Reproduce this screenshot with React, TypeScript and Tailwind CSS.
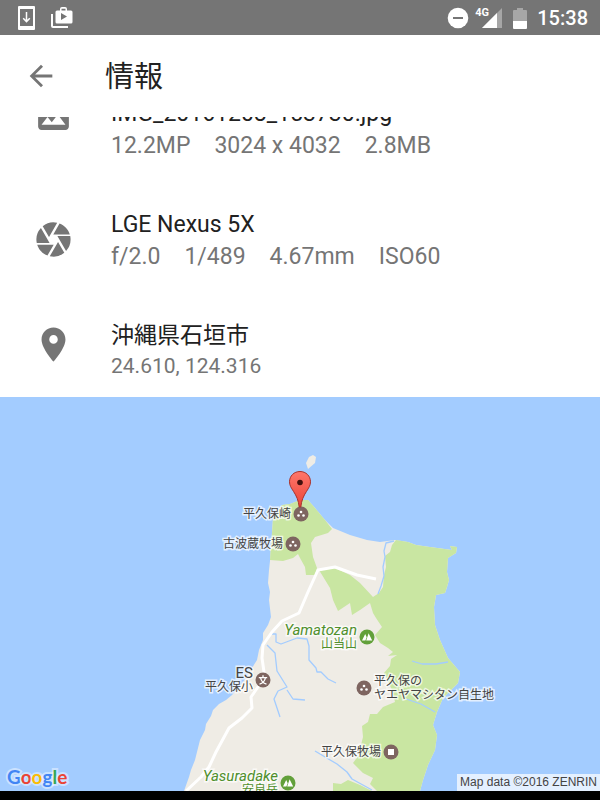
import React from "react";
import { MdArrowBack, MdCamera, MdPhoto, MdPlace } from "react-icons/md";

const details = [
  {
    icon: MdPhoto,
    iconClass: "-mt-1",
    title: "IMG_20161208_153730.jpg",
    values: ["12.2MP", "3024 x 4032", "2.8MB"],
    valueClass: "text-[23px] leading-8",
  },
  {
    icon: MdCamera,
    iconClass: "mt-2.5",
    title: "LGE Nexus 5X",
    values: ["f/2.0", "1/489", "4.67mm", "ISO60"],
    valueClass: "text-[23px] leading-8",
  },
  {
    icon: MdPlace,
    iconClass: "mt-1",
    title: "沖縄県石垣市",
    values: ["24.610, 124.316"],
    valueClass: "text-[21px] leading-7",
  },
];

const StatusBar: React.FC = () => (
  <div className="h-[35px] bg-[#757575] text-white flex items-center justify-between pl-[18px] pr-3">
    <div className="flex items-center gap-4">
      <svg width="17" height="24" viewBox="0 0 17 24" fill="none">
        <path
          fill="#fff"
          fillRule="evenodd"
          d="M1 0h15a1 1 0 0 1 1 1v22a1 1 0 0 1-1 1H1a1 1 0 0 1-1-1V1a1 1 0 0 1 1-1zM2 3v17h13V3z"
        />
        <path stroke="#fff" strokeWidth="1.500" d="M8.500 6v9.500M5.200 12.300l3.300 3.300 3.300-3.300" />
      </svg>
      <svg width="22" height="22" viewBox="0 0 22 22" fill="none">
        <path stroke="#fff" strokeWidth="2" d="M1 7v12a1 1 0 0 0 1 1h15" />
        <path
          fill="#fff"
          fillRule="evenodd"
          d="M9 3.500V2a2 2 0 0 1 2-2h3a2 2 0 0 1 2 2v1.500h4a1.500 1.500 0 0 1 1.500 1.500v10a1.500 1.500 0 0 1-1.500 1.500H6A1.500 1.500 0 0 1 4.500 15V5A1.500 1.500 0 0 1 6 3.500zM10.500 3.500h4V1.800h-4zM10 6v7l6-3.500z"
        />
      </svg>
    </div>
    <div className="flex items-center">
      <svg width="22" height="22" viewBox="0 0 22 22">
        <circle cx="11" cy="11" r="10.300" fill="#fff" />
        <path fill="#757575" d="M6 10h10v2H6z" />
      </svg>
      <div className="relative ml-3 w-[22px] h-[22px]">
        <svg width="22" height="22" viewBox="0 0 22 22">
          <path fill="#a6a6a6" d="M21 1v20H1z" />
          <path fill="#fff" d="M16 6v15H1z" />
        </svg>
        <span className="absolute -left-1.5 top-0 text-[11px] leading-3 font-bold [-webkit-text-stroke:2px_#757575] [paint-order:stroke_fill]">
          4G
        </span>
      </div>
      <svg className="ml-2.5" width="14" height="22" viewBox="0 0 14 22">
        <path fill="#a6a6a6" d="M4 1h6v2h3a1 1 0 0 1 1 1v10H0V4a1 1 0 0 1 1-1h3z" />
        <path fill="#fff" d="M0 14h14v7a1 1 0 0 1-1 1H1a1 1 0 0 1-1-1z" />
      </svg>
      <span className="ml-2.5 text-xl font-medium">15:38</span>
    </div>
  </div>
);

const PinShape: React.FC<{ kind: string }> = ({ kind }) => (
  <svg className="shrink-0" width="16" height="16" viewBox="0 0 16 16">
    <circle cx="8" cy="8" r="7.500" fill={kind === "mountain" ? "#62a03a" : "#7e6560"} />
    {kind === "dots" && (
      <g fill="#fff">
        <circle cx="8" cy="6" r="1.300" />
        <circle cx="5.500" cy="9.500" r="1.300" />
        <circle cx="10.500" cy="9.500" r="1.300" />
      </g>
    )}
    {kind === "square" && <path fill="#fff" d="M5 5h6v6H5z" />}
    {kind === "school" && (
      <path
        fill="none"
        stroke="#fff"
        strokeWidth="1.300"
        d="M8 3.200v2M3.800 5.600h8.400M5.600 5.800c.6 3 2.600 5.400 5.900 6.400M10.400 5.800c-.6 3-2.600 5.400-5.900 6.400"
      />
    )}
    {kind === "mountain" && (
      <path fill="#fff" d="M3 11.500 6.200 5l1.500 3.200-1.300 3.300zM7.200 11.500 9.600 4.200l3.600 7.300z" />
    )}
  </svg>
);

const places = [
  { kind: "dots", lines: ["平久保崎"], at: "right-[291px] top-[109px]" },
  { kind: "dots", lines: ["古波蔵牧場"], at: "right-[299px] top-[139px]" },
  { kind: "mountain", lines: ["Yamatozan", "山当山"], at: "right-[225px] top-[226px]" },
  { kind: "school", lines: ["ES", "平久保小"], at: "right-[329px] top-[269px]" },
  { kind: "dots", lines: ["平久保の", "ヤエヤマシタン自生地"], at: "left-[356px] top-[277px] flex-row-reverse" },
  { kind: "square", lines: ["平久保牧場"], at: "right-[201px] top-[347px]" },
  { kind: "mountain", lines: ["Yasuradake", "安良岳"], at: "right-[304px] top-[372px]" },
];

const Terrain: React.FC = () => (
  <svg className="block" width="600" height="394" viewBox="0 397 600 394" fill="none">
    <path
      fill="#efece5"
      d="M184 791 189 777 191 770 195 760 197 752 200 740 205 730 206 724 211 716 213 710 219 704 226 700 232 695 240 686 246 678 252 668 257 660 259 650 263 640 263 633 268 625 271 617 269 600 270 592 268 583 269 570 270 561 271 545 272 533 273 518 282 505 290 504 300 500 308 500 315 508 325 520 333 528 350 535 367 540 380 542 395 540 408 542 416 545 430 547 452 550 450 546 457 547 456 553 448 558 447 572 449 580 447 587 445 593 436 595 434 607 435 625 440 640 448 658 460 672 458 683 443 698 437 712 433 725 437 735 435 750 428 765 423 780 420 791z"
    />
    <path fill="#efece5" d="m306 463 3-6 4-2 3 2-1 6-7 6z" />
    <g fill="#c9e6a2">
      <path d="M270 560 271 545 272 533 273 518 282 505 290 504 300 500 308 500 315 508 325 520 332 529 328 533 315 537 311 543 313 557 317 568 315 575 306 575 305 567 300 558 298 554 293 558 283 561z" />
      <path d="M319 570 327 569 335 568 350 575 360 583 373 597 379 593 383 587 384 575 386 567 385 556 390 552 392 545 396 540 408 542 416 545 430 547 452 550 450 546 457 547 456 553 448 558 447 572 449 580 447 587 445 593 436 595 434 607 435 625 440 640 448 658 460 672 458 683 443 698 437 712 433 725 437 735 435 750 428 765 423 780 420 791 377 791 370 784 373 778 363 773 353 763 359 755 361 745 363 737 362 726 368 722 370 714 377 714 383 707 395 702 392 690 384 673 390 666 391 659 397 655 388 656 393 652 388 648 380 643 375 635 382 627 376 618 373 613 370 603 360 610 352 615 350 603 338 611 333 600 330 588z" />
      <path d="M333 791v-8l8 1 7-4 12 5 12 6z" />
    </g>
    <g stroke="#a3ccff" strokeWidth="1.300" strokeLinejoin="round">
      <path d="m394 541-8 2-2 8 1 6-2 10 1 9-3 10-3 8" />
      <path d="m267 645 8 8 2 18 10 16-9 4-4 8 6 18M287 690l6 9 12 1M272 634h4v8l5 2 16-6 10 1 2 7 0 14 7 8 1 4 4 0 7 7 8 4" />
      <path d="m412 661 10 3h14l12-2M406 699l15 5 14 8M315 751l22 13 10 8 5 7 20 11" />
    </g>
    <path
      stroke="#fff"
      strokeWidth="3"
      strokeLinejoin="round"
      d="m376 579-19-4-22-8-17 3-10 22-9 21-17 8-10 11-9 13-1 13 2 14-4 12-9 13 1 11-10 10-13 10-13 24-7 15-8 10-15 14"
    />
  </svg>
);

const LocationMap: React.FC = () => (
  <div className="relative h-[394px] overflow-hidden bg-[#a3ccff]">
    <div className="absolute left-1/2 top-0 w-[600px] -translate-x-1/2">
      <Terrain />
      {places.map((place) => (
        <div
          key={place.lines[0]}
          className={`absolute flex items-center gap-0.5 ${place.at} ${
            place.kind === "mountain" ? "text-[#4f8f2c]" : "text-[#444]"
          }`}
        >
          <div
            className={`flex flex-col text-xs leading-[14px] whitespace-nowrap [-webkit-text-stroke:3px_#ffffffb0] [paint-order:stroke_fill] ${
              place.at.startsWith("left") ? "items-start" : "items-end"
            }`}
          >
            {place.lines.map((line) => (
              <span
                key={line}
                className={
                  line.startsWith("Ya")
                    ? "text-[15px] leading-[14px] italic"
                    : line === "ES"
                      ? "text-[15px] leading-[14px]"
                      : ""
                }
              >
                {line}
              </span>
            ))}
          </div>
          <PinShape kind={place.kind} />
        </div>
      ))}
      <svg
        className="absolute left-[288px] top-[73px]"
        width="24"
        height="40"
        viewBox="0 0 24 40"
      >
        <defs>
          <linearGradient id="marker" x1="0" y1="0" x2="0" y2="1">
            <stop offset="0" stopColor="#ff776b" />
            <stop offset="1" stopColor="#ea4438" />
          </linearGradient>
        </defs>
        <path
          fill="url(#marker)"
          stroke="#a8322c"
          strokeWidth="1"
          d="M12 1.500c-6 0-10.500 4.500-10.500 10.300 0 3.700 1.700 6 4 9.600 3 4.600 5 9 5.700 15.600h1.600c.7-6.600 2.700-11 5.700-15.600 2.300-3.600 4-5.900 4-9.600C22.500 6 18 1.500 12 1.500z"
        />
        <circle cx="12" cy="12.500" r="2.800" fill="#42100d" />
      </svg>
    </div>
    <a
      href="#"
      className="absolute left-[7px] bottom-0.5 font-['Lato'] font-bold text-[19px] leading-6 [-webkit-text-stroke:4px_#ffffff70] [paint-order:stroke_fill]"
    >
      <span className="text-[#4285f4]">G</span>
      <span className="text-[#ea4335]">o</span>
      <span className="text-[#fbbc05]">o</span>
      <span className="text-[#4285f4]">g</span>
      <span className="text-[#34a853]">l</span>
      <span className="text-[#ea4335]">e</span>
    </a>
    <span className="absolute right-0 bottom-0 bg-white/70 px-[3px] font-['Liberation_Sans'] text-xs leading-[17px] text-[#444]">
      Map data ©2016 ZENRIN
    </span>
  </div>
);

const App: React.FC = () => {
  return (
    <div
      lang="ja"
      className="min-h-screen flex flex-col bg-white text-[#212121] font-['Roboto','Noto_Sans_CJK_JP',sans-serif]"
    >
      <StatusBar />

      <header className="h-[82px] flex items-center pl-6 gap-[47px]">
        <button aria-label="戻る" className="text-[#757575]">
          <MdArrowBack size={34} />
        </button>
        <h1 className="pt-0.5 text-[29px] leading-10">情報</h1>
      </header>

      <main className="overflow-hidden">
        <ul className="-mt-[19px] flex flex-col gap-[47px] pb-[17px]">
          {details.map(({ icon: Icon, iconClass, title, values, valueClass }) => (
            <li key={title} className="flex items-start pl-[33px]">
              <Icon size={41} className={`shrink-0 text-[#757575] ${iconClass}`} />
              <div className="ml-[37px]">
                <h2 className="text-[23px] leading-8">{title}</h2>
                <p className={`flex gap-6 text-[#757575] ${valueClass}`}>
                  {values.map((value) => (
                    <span key={value}>{value}</span>
                  ))}
                </p>
              </div>
            </li>
          ))}
        </ul>
      </main>

      <LocationMap />
      <div className="grow min-h-2 bg-black" />
    </div>
  );
};

export default App;
